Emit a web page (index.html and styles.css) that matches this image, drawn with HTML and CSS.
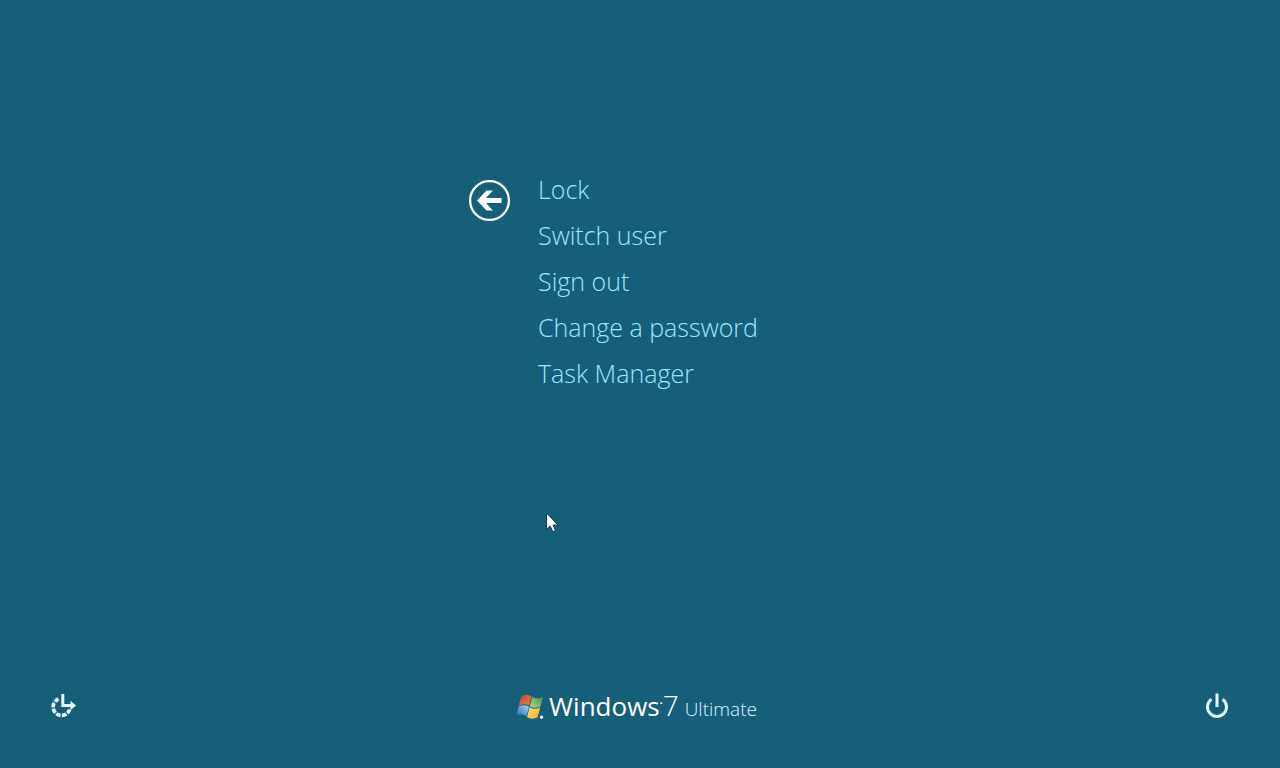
FILE: index.html
```html
<!DOCTYPE html>
<html lang="en">
<head>
<meta charset="utf-8">
<meta name="viewport" content="width=device-width, initial-scale=1">
<title>Security options</title>
<link rel="stylesheet" href="styles.css">
</head>
<body class="screen">
<main class="options">
  <button class="back" type="button" aria-label="Back">
    <svg viewBox="0 0 42 42" aria-hidden="true"><circle cx="21.500" cy="20.500" r="19.4" fill="none" stroke="#fff" stroke-width="2.3"/><path d="M9 20.500 18.500 10.500H25L18 18H33.500V23H18L25 30.500H18.500Z" fill="#fff"/></svg>
  </button>
  <nav class="menu" aria-label="Security options">
    <button class="option" type="button">Lock</button>
    <button class="option" type="button">Switch user</button>
    <button class="option" type="button">Sign out</button>
    <button class="option" type="button">Change a password</button>
    <button class="option" type="button">Task Manager</button>
  </nav>
</main>
<footer class="bar">
  <button class="tool" type="button" aria-label="Ease of access">
    <svg viewBox="0 0 28 28" aria-hidden="true"><g fill="none" stroke="#e6fbff"><path d="M9.500 7A8.500 8.500 0 1 0 20.700 17.500" stroke-width="3.600" stroke-dasharray="4.600 1.300"/><path d="M13.800 2V13.500H23" stroke-width="3"/></g><path d="M21.500 8.700 27 13.500 21.500 18.300Z" fill="#e6fbff"/></svg>
  </button>
  <div class="brand">
    <svg class="flag" viewBox="0 0 28 28" aria-hidden="true">
      <defs>
        <linearGradient id="red" x1="0" y1="0" x2="1" y2="1"><stop stop-color="#b8442c"/><stop offset="1" stop-color="#f58148"/></linearGradient>
        <linearGradient id="green" x1="1" y1="0" x2="0" y2="1"><stop stop-color="#3d9a52"/><stop offset="1" stop-color="#b5d985"/></linearGradient>
        <linearGradient id="blue" x1="0" y1="1" x2="1" y2="0"><stop stop-color="#2469b5"/><stop offset="1" stop-color="#a1d8f6"/></linearGradient>
        <linearGradient id="yellow" x1="0" y1="0" x2="1" y2="1"><stop stop-color="#ffe28c"/><stop offset="1" stop-color="#f0a91d"/></linearGradient>
      </defs>
      <path d="M4.300 3.500Q9.500 0 14.500 3.200L12 12.500Q7 9.700 1.500 12.800Z" fill="url(#red)"/>
      <path d="M15.200 4Q20.500 6.900 26 4L23.300 13.500Q18.500 16.200 12.800 13.200Z" fill="url(#green)"/>
      <path d="M1.500 13.800Q7 10.900 12 13.700L9.500 23Q4.500 20 -.5 22Z" fill="url(#blue)"/>
      <path d="M12.600 14.200Q17.500 17.200 23.200 14.400L20.700 24.300Q15.500 27 10 24.200Z" fill="url(#yellow)"/>
      <circle cx="24.500" cy="24.200" r="1.600" fill="#fff"/>
    </svg>
    <span class="product">Windows<sup class="mark">•</sup></span><span class="version">7</span><span class="edition">Ultimate</span>
  </div>
  <button class="tool" type="button" aria-label="Shut down">
    <svg viewBox="0 0 28 28" aria-hidden="true"><path d="M8.400 7.300A9.500 9.500 0 1 0 19.600 7.300M14 1.500V15" fill="none" stroke="#e6fbff" stroke-width="3"/></svg>
  </button>
</footer>
<svg class="pointer" viewBox="0 0 14 21" aria-hidden="true"><path d="M1.500 1V17.500L5.200 14 7.800 19.800 10.500 18.600 8 13H12.800Z" fill="#fff" stroke="#123a58" stroke-width="1"/></svg>
</body>
</html>
```
FILE: styles.css
```css
* { box-sizing: border-box; }

.screen {
  position: relative;
  display: flex;
  flex-direction: column;
  min-height: 100vh;
  margin: 0;
  background: #165f7b;
  color: #fff;
  font-family: "Open Sans", "Noto Sans", sans-serif;
}

button {
  padding: 0;
  border: 0;
  background: none;
  color: inherit;
  font: inherit;
  cursor: pointer;
}

.options {
  display: grid;
  grid-template-columns: 42px 274px;
  column-gap: 28px;
  justify-content: center;
  align-items: start;
  flex: 1;
  padding-top: 166px;
}

.back {
  width: 42px;
  height: 42px;
  margin-top: 14px;
}

.back svg, .tool svg { display: block; width: 100%; }

.menu {
  display: flex;
  flex-direction: column;
  align-items: flex-start;
}

.option {
  color: #9ae8fc;
  font-size: 25px;
  font-weight: 300;
  line-height: 46px;
  white-space: nowrap;
}

.bar {
  display: flex;
  align-items: center;
  justify-content: space-between;
  padding: 0 49px 43px;
}

.tool { width: 28px; height: 28px; }

.tool svg { margin-top: -2px; }

.brand {
  display: flex;
  align-items: baseline;
  margin-right: 6px;
  line-height: 32px;
}

.flag {
  align-self: center;
  width: 28px;
  height: 28px;
  margin-right: 4px;
}

.product { font-size: 26px; }

.mark {
  font-size: 8px;
  line-height: 0;
}

.version {
  font-size: 28px;
  font-weight: 300;
}

.edition {
  margin-left: 6px;
  color: #dcf6fc;
  font-size: 19px;
  font-weight: 300;
}

.pointer {
  position: absolute;
  top: 68%;
  left: 50%;
  width: 14px;
  height: 21px;
  margin: -10px 0 0 -95px;
}
```
